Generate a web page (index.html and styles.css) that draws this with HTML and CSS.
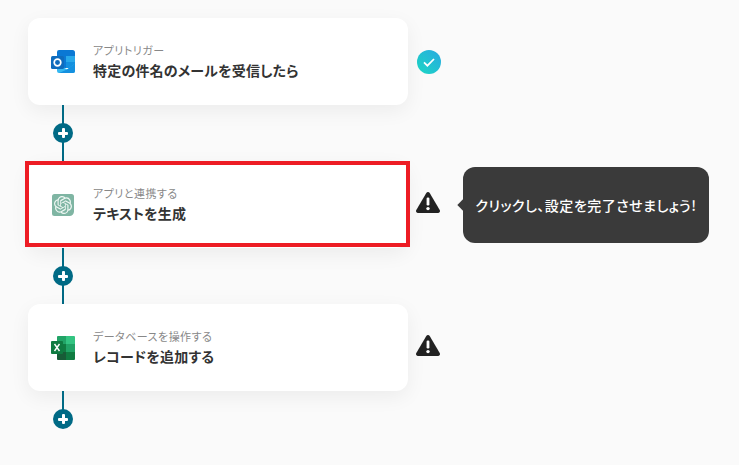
FILE: index.html
```html
<!DOCTYPE html>
<html lang="ja">
<head>
    <meta charset="UTF-8">
    <title>フロー</title>
    <link rel="stylesheet" href="styles.css">
</head>
<body>
    <div class="flow">
        <!-- トリガー -->
        <div class="step">
            <div class="card">
                <svg class="app-icon" viewBox="0 0 24 24">
                    <path fill="#0a78d4" d="M8 0h13.500A2.500 2.500 0 0 1 24 2.500V6H6V2a2 2 0 0 1 2-2z"/>
                    <path fill="#0a78d4" d="M6 6h9v12H6z"/>
                    <path fill="#28a8ea" d="M15 6h9v6h-9z"/>
                    <path fill="#1490df" d="M15 12h9v6h-9z"/>
                    <path fill="#35b8f1" d="M6 13l10 6.500 8-6V21a2 2 0 0 1-2 2H8a2 2 0 0 1-2-2z"/>
                    <path fill="#1490df" d="M16 19.500l8-6V21a2 2 0 0 1-2 2H8z"/>
                    <rect fill="#0f6cbd" x="0" y="6" width="13" height="13" rx="1.500"/>
                    <circle cx="6.500" cy="12.500" r="3.300" fill="none" stroke="#fff" stroke-width="1.700"/>
                </svg>
                <div class="card-text">
                    <div class="card-label">アプリトリガー</div>
                    <div class="card-title">特定の件名のメールを受信したら</div>
                </div>
            </div>
            <div class="status">
                <svg class="check-icon" viewBox="0 0 24 24">
                    <defs>
                        <linearGradient id="checkGrad" x1="1" y1="0" x2="0" y2="1">
                            <stop offset="0" stop-color="#29a9e1"/>
                            <stop offset="1" stop-color="#1cd8c4"/>
                        </linearGradient>
                    </defs>
                    <circle cx="12" cy="12" r="12" fill="url(#checkGrad)"/>
                    <path d="M7 12.300l3.400 3.400L17 9" fill="none" stroke="#fff" stroke-width="1.700"/>
                </svg>
            </div>
        </div>
        <div class="connector"><span class="add-btn"></span></div>

        <!-- テキスト生成 -->
        <div class="step">
            <div class="card">
                <svg class="app-icon" viewBox="0 0 24 24">
                    <path fill="#7fb5a3" d="M3.500 1h17A2.500 2.500 0 0 1 23 3.500v15c0 2.500-2 4.500-4.500 4.500h-15A2.500 2.500 0 0 1 1 20.500v-17A2.500 2.500 0 0 1 3.500 1z"/>
                    <g transform="translate(3 3) scale(0.75)">
                        <path fill="#eef7f3" d="M22.2819 9.8211a5.9847 5.9847 0 0 0-.5157-4.9108 6.0462 6.0462 0 0 0-6.5098-2.9A6.0651 6.0651 0 0 0 4.9807 4.1818a5.9847 5.9847 0 0 0-3.9977 2.9 6.0462 6.0462 0 0 0 .7427 7.0966 5.98 5.98 0 0 0 .511 4.9107 6.051 6.051 0 0 0 6.5146 2.9001A5.9847 5.9847 0 0 0 13.2599 24a6.0557 6.0557 0 0 0 5.7718-4.2058 5.9894 5.9894 0 0 0 3.9977-2.9001 6.0557 6.0557 0 0 0-.7475-7.0729zm-9.022 12.6081a4.4755 4.4755 0 0 1-2.8764-1.0408l.1419-.0804 4.7783-2.7582a.7948.7948 0 0 0 .3927-.6813v-6.7369l2.02 1.1686a.071.071 0 0 1 .038.052v5.5826a4.504 4.504 0 0 1-4.4945 4.4944zm-9.6607-4.1254a4.4708 4.4708 0 0 1-.5346-3.0137l.142.0852 4.783 2.7582a.7712.7712 0 0 0 .7806 0l5.8428-3.3685v2.3324a.0804.0804 0 0 1-.0332.0615L9.74 19.9502a4.4992 4.4992 0 0 1-6.1408-1.6464zM2.3408 7.8956a4.485 4.485 0 0 1 2.3655-1.9728V11.6a.7664.7664 0 0 0 .3879.6765l5.8144 3.3543-2.0201 1.1685a.0757.0757 0 0 1-.071 0l-4.8303-2.7865A4.504 4.504 0 0 1 2.3408 7.872zm16.5963 3.8558L13.1038 8.364 15.1192 7.2a.0757.0757 0 0 1 .071 0l4.8303 2.7913a4.4944 4.4944 0 0 1-.6765 8.1042v-5.6772a.79.79 0 0 0-.407-.667zm2.0107-3.0231l-.142-.0852-4.7735-2.7818a.7759.7759 0 0 0-.7854 0L9.409 9.2297V6.8974a.0662.0662 0 0 1 .0284-.0615l4.8303-2.7866a4.4992 4.4992 0 0 1 6.6802 4.66zM8.3065 12.863l-2.02-1.1638a.0804.0804 0 0 1-.038-.0567V6.0742a4.4992 4.4992 0 0 1 7.3757-3.4537l-.142.0805L8.704 5.459a.7948.7948 0 0 0-.3927.6813zm1.0976-2.3654l2.602-1.4998 2.6069 1.4998v2.9994l-2.5974 1.4997-2.6067-1.4997Z"/>
                    </g>
                </svg>
                <div class="card-text">
                    <div class="card-label">アプリと連携する</div>
                    <div class="card-title">テキストを生成</div>
                </div>
                <div class="highlight"></div>
            </div>
            <div class="status">
                <svg class="warn-icon" viewBox="0 0 24 21">
                    <path fill="#222" d="M10.300 1a2 2 0 0 1 3.400 0l10 17a2 2 0 0 1-1.700 3H2a2 2 0 0 1-1.700-3z"/>
                    <rect fill="#fff" x="10.600" y="5.500" width="2.800" height="8" rx="1.200"/>
                    <circle fill="#fff" cx="12" cy="16.600" r="1.700"/>
                </svg>
            </div>
            <div class="tooltip">クリックし、設定を完了させましょう!</div>
        </div>
        <div class="connector"><span class="add-btn"></span></div>

        <!-- レコード追加 -->
        <div class="step">
            <div class="card">
                <svg class="app-icon" viewBox="0 0 24 24">
                    <path fill="#21a366" d="M7 0h8v8H6V1a1 1 0 0 1 1-1z"/>
                    <path fill="#33c481" d="M15 0h8a1 1 0 0 1 1 1v7h-9z"/>
                    <path fill="#107c41" d="M6 8h9v8H6z"/>
                    <path fill="#21a366" d="M15 8h9v8h-9z"/>
                    <path fill="#185c37" d="M6 16h9v8H7a1 1 0 0 1-1-1z"/>
                    <path fill="#107c41" d="M15 16h9v7a1 1 0 0 1-1 1h-8z"/>
                    <rect fill="#0f7b41" x="0" y="5" width="12" height="13" rx="1"/>
                    <path d="M3.500 8l5 7M8.500 8l-5 7" fill="none" stroke="#fff" stroke-width="1.400"/>
                </svg>
                <div class="card-text">
                    <div class="card-label">データベースを操作する</div>
                    <div class="card-title">レコードを追加する</div>
                </div>
            </div>
            <div class="status">
                <svg class="warn-icon" viewBox="0 0 24 21">
                    <path fill="#222" d="M10.300 1a2 2 0 0 1 3.400 0l10 17a2 2 0 0 1-1.700 3H2a2 2 0 0 1-1.700-3z"/>
                    <rect fill="#fff" x="10.600" y="5.500" width="2.800" height="8" rx="1.200"/>
                    <circle fill="#fff" cx="12" cy="16.600" r="1.700"/>
                </svg>
            </div>
        </div>
        <div class="connector connector-last"><span class="add-btn"></span></div>
    </div>
</body>
</html>
```

FILE: styles.css
```css
* {
    margin: 0;
    padding: 0;
    box-sizing: border-box;
}

html, body {
    height: 100%;
    overflow: hidden;
}

body {
    font-family: "Noto Sans CJK JP", "Noto Sans", sans-serif;
    font-feature-settings: "palt";
    letter-spacing: 0.03em;
    background: #fafafa;
    color: #333;
}

.flow {
    padding: 18px 0 0 28px;
}

.step {
    position: relative;
    display: flex;
    align-items: center;
    gap: 9px;
}

.card {
    position: relative;
    display: flex;
    align-items: center;
    gap: 18px;
    width: 380px;
    height: 87px;
    padding: 0 23px;
    background: white;
    border-radius: 12px;
    box-shadow: 0 6px 20px rgba(0, 0, 0, 0.06);
}

.app-icon {
    width: 24px;
    height: 24px;
    flex-shrink: 0;
}

.card-text {
    padding-bottom: 2px;
}

.card-label {
    font-size: 11px;
    line-height: 16px;
    color: #888;
}

.card-title {
    margin-top: 2px;
    font-size: 14px;
    line-height: 20px;
    font-weight: 600;
    letter-spacing: 0.2px;
    color: #333;
}

.highlight {
    position: absolute;
    top: 0;
    left: -3px;
    right: -2px;
    bottom: 1px;
    border: 4.5px solid #ed1c24;
}

.status {
    display: flex;
    width: 24px;
}

.check-icon {
    width: 24px;
    height: 24px;
}

.warn-icon {
    width: 24px;
    height: 21px;
    margin: 0 0 4px -1px;
    flex-shrink: 0;
}

.tooltip {
    position: absolute;
    left: 435px;
    top: 6px;
    display: flex;
    align-items: center;
    justify-content: center;
    width: 246px;
    height: 76px;
    background: #3a3a3a;
    border-radius: 12px;
    color: white;
    font-size: 14px;
    font-weight: 500;
    white-space: nowrap;
}

.tooltip::before {
    content: "";
    position: absolute;
    left: -4px;
    top: 34px;
    width: 8px;
    height: 8px;
    background: #3a3a3a;
    transform: rotate(45deg);
}

.connector {
    position: relative;
    display: flex;
    justify-content: center;
    width: 2px;
    height: 56px;
    margin-left: 34px;
    background: #006a85;
}

.connector-last {
    height: 28px;
}

.add-btn {
    position: absolute;
    top: 18px;
    left: -9px;
    width: 20px;
    height: 20px;
    border-radius: 50%;
    background: #006a85;
}

.add-btn::before,
.add-btn::after {
    content: "";
    position: absolute;
    background: white;
    border-radius: 1px;
}

.add-btn::before {
    left: 5px;
    top: 8.5px;
    width: 10px;
    height: 3px;
}

.add-btn::after {
    left: 8.5px;
    top: 5px;
    width: 3px;
    height: 10px;
}
```
